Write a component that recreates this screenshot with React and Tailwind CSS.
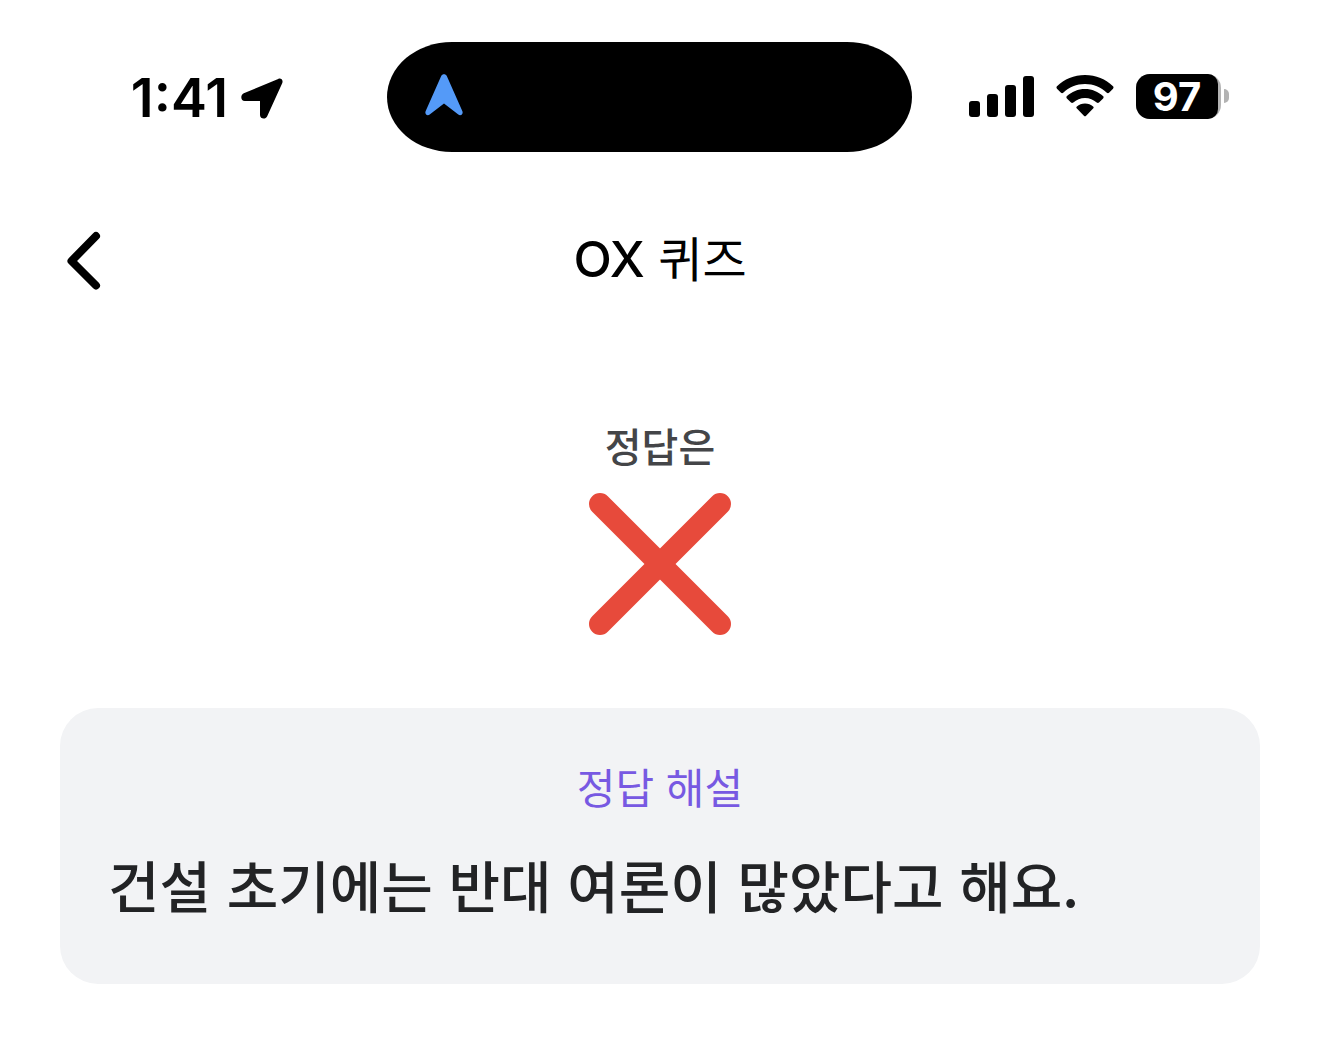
function LocationArrow() {
  return (
    <svg className="h-11 w-11 shrink-0" viewBox="0 0 44 44" fill="currentColor" aria-hidden="true">
      <path d="M3.800 17.200 38.200 2.900c2.600-1.200 5.200 1.200 4.100 4L27.200 40.200c-1.700 3.800-7.200 2.800-7.200-1.200V25H4.800C.7 25 0 18.900 3.800 17.200Z" />
    </svg>
  )
}

function NavigationArrow() {
  return (
    <svg className="h-[42px] w-[38px]" viewBox="0 0 38 42" fill="#549af8" aria-hidden="true">
      <path d="M16.2 2C17.2-.4 20.8-.4 21.8 2L37.4 37.2c1.1 2.8-1.6 5.2-4.1 3.4L19 29.4 4.7 40.6C2.2 42.4-.5 40 .6 37.2Z" />
    </svg>
  )
}

function SignalBars() {
  return (
    <svg className="h-[41px] w-[65px]" viewBox="0 0 65 41" fill="currentColor" aria-label="신호 세기">
      <rect x="0" y="25" width="11" height="16" rx="3" />
      <rect x="18" y="18" width="11" height="23" rx="3" />
      <rect x="36" y="9" width="11" height="32" rx="3" />
      <rect x="54" y="0" width="11" height="41" rx="3" />
    </svg>
  )
}

function Wifi() {
  return (
    <svg className="h-[42px] w-[58px]" viewBox="0 0 58 42" fill="currentColor" aria-label="와이파이">
      <path d="M29 0c11 0 20.800 4.200 28 11.300.7.700.7 1.700 0 2.400l-4 4c-.6.600-1.500.600-2.200 0C45 12.100 37.400 8.900 29 8.900S13 12.100 7.200 17.700c-.7.600-1.600.600-2.200 0l-4-4c-.7-.7-.7-1.700 0-2.400C8.200 4.200 18 0 29 0Z" />
      <path d="M29 14c7 0 13.300 2.700 18 7.100.8.700.8 1.700.1 2.400l-4.100 4.100c-.7.700-1.600.600-2.300 0C37.600 24.700 33.500 23 29 23s-8.600 1.700-11.700 4.600c-.7.600-1.600.700-2.300 0l-4.100-4.100c-.7-.7-.7-1.700.1-2.400C15.700 16.700 22 14 29 14Z" />
      <path d="M29 28.500c3.200 0 6 1.100 8.100 3 .8.700.7 1.300 0 2l-7 7.200c-.7.700-1.500.700-2.200 0l-7-7.200c-.7-.7-.8-1.300 0-2 2.100-1.900 4.900-3 8.100-3Z" />
    </svg>
  )
}

function Battery({ level }) {
  return (
    <div className="flex items-center gap-[3px]">
      <div className="w-[85px] rounded-[14px] bg-[#b3b3b3] pr-[3px]">
        <div className="rounded-l-[14px] rounded-r-[10px] bg-black text-center text-[40px] leading-[45px] font-bold text-white">
          {level}
        </div>
      </div>
      <div className="h-[14px] w-[5px] rounded-r-full bg-[#b3b3b3]" />
    </div>
  )
}

function StatusBar() {
  return (
    <div className="grid grid-cols-[387fr_525fr_408fr] items-center pt-[42px] font-['Inter',sans-serif]">
      <div className="flex items-center justify-end gap-3 pt-0.5 pr-[103px]">
        <time className="text-[54px] leading-[56px] font-semibold">1:41</time>
        <LocationArrow />
      </div>
      <div className="flex h-[110px] items-center rounded-[65px/55px] bg-black pb-1 pl-[38px]">
        <NavigationArrow />
      </div>
      <div className="flex items-center gap-[22px] pb-0.5 pl-[57px]">
        <SignalBars />
        <Wifi />
        <Battery level={97} />
      </div>
    </div>
  )
}

function Header() {
  return (
    <header className="mt-[60px] grid h-24 grid-cols-[1fr_auto_1fr] items-center px-[60px]">
      <button type="button" aria-label="뒤로 가기" className="w-12 cursor-pointer">
        <svg className="h-[60px] w-12" viewBox="0 0 48 60" fill="none" stroke="currentColor" strokeWidth="8" strokeLinecap="round" strokeLinejoin="round">
          <path d="M36 6 11.500 31 36 55.500" />
        </svg>
      </button>
      <h1 className="pb-1 text-[48px] leading-none font-normal">
        <span className="font-['Inter','Noto_Sans_CJK_KR',sans-serif] text-[50px] font-medium">OX</span> 퀴즈
      </h1>
    </header>
  )
}

export default function App() {
  return (
    <div className="min-h-screen bg-white font-['Noto_Sans_CJK_KR',sans-serif] text-black" lang="ko">
      <StatusBar />
      <Header />

      <main className="px-[60px] pb-16">
        <section className="flex flex-col items-center pt-[109px]">
          <p className="text-[40px] leading-[56px] font-medium text-[#444548]">정답은</p>
          <svg className="mt-5 h-[142px] w-[142px]" viewBox="0 0 142 142" stroke="#e74a3b" strokeWidth="22" strokeLinecap="round" role="img" aria-label="X">
            <path d="M11 11 131 131M131 11 11 131" />
          </svg>
        </section>

        <section className="mt-[73px] rounded-[38px] bg-[#f2f3f5] px-12 pt-12 pb-[60px]">
          <h2 className="text-center text-[42px] leading-[60px] font-normal text-[#7759e2]">정답 해설</h2>
          <p className="mt-7 text-[56px] leading-[80px] font-medium text-[#222325]">
            건설 초기에는 반대 여론이 많았다고 해요.
          </p>
        </section>
      </main>
    </div>
  )
}
